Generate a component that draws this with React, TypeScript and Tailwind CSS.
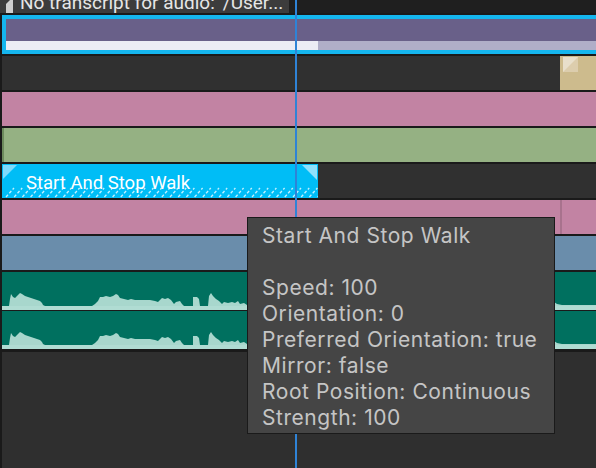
import React from 'react';

const WAVE =
  'M0,34 L7,34 L8,27 L9,22 L11,25 L13,26 L16,23 L18,21 L20,22 L23,24 L26,25 L29,26 L32,27 L35,28 L38,29 L40,31 L41,33 L43,34 L90,34 L93,32 L96,29 L98,25 L101,25 L104,24 L108,25 L111,24 L114,22 L116,23 L118,26 L122,27 L126,28 L129,27 L133,28 L138,28 L143,28 L148,28 L153,29 L156,30 L158,28 L160,26 L163,27 L166,26 L169,28 L172,32 L174,30 L178,29 L180,32 L182,34 L191,34 L191,25 L195,25 L197,27 L198,34 L206,34 L207,24 L209,21 L211,24 L214,27 L217,29 L220,32 L222,30 L226,31 L230,30 L233,31 L236,29 L238,32 L242,31 L245,33 L260,30 L280,32 L300,28 L320,31 L340,27 L360,32 L380,29 L400,31 L420,28 L440,32 L460,30 L480,31 L500,29 L520,32 L540,31 L552,30 L555,32 L560,33 L594,33 L594,34 Z';

function Channel() {
  return (
    <div className="h-[38px] bg-[#00705f]">
      <svg width="594" height="38" viewBox="0 0 594 38" className="block">
        <path d={WAVE} fill="#a8d7cd" />
        <rect x="0" y="34" width="594" height="4" fill="#b0dcd3" />
      </svg>
    </div>
  );
}

function Hatch() {
  const xs = Array.from({ length: 39 }, (_, i) => 4 + i * 8.2);
  return (
    <svg width="316" height="34" viewBox="0 0 316 34" className="absolute inset-0">
      <polygon points="1,1 15,1 1,15" fill="#7fdbfb" />
      <polygon points="300,1 315,1 315,16" fill="#8fe1fc" />
      {xs.map((x) => (
        <line
          key={x}
          x1={x}
          y1={33}
          x2={x + 8}
          y2={24}
          stroke="#c2f1ff"
          strokeWidth="1.3"
          strokeDasharray="3 2"
        />
      ))}
    </svg>
  );
}

export default function App() {
  return (
    <div className="relative w-[596px] h-[468px] overflow-hidden bg-[#1a1a1a] font-['Roboto',sans-serif]">
      {/* top partial row */}
      <div className="flex h-[13px]">
        <div className="w-[289px] bg-[#3c3c3c] flex overflow-hidden">
          <svg width="16" height="13" viewBox="0 0 16 13" className="shrink-0">
            <polygon points="6,4 10,0 13,0 13,13 6,13" fill="#cfcfcf" />
          </svg>
          <span className="ml-[4px] -mt-[7px] text-[19px] leading-[19px] text-[#e6e6e6] whitespace-nowrap">
            No transcript for audio: '/User...
          </span>
        </div>
        <div className="flex-1 bg-[#1f1f1f]" />
      </div>

      <div className="flex flex-col gap-[2px] mt-[2px] pl-[2px]">
        {/* selected clip */}
        <div className="h-[39px] border-[4px] border-r-0 border-[#15b6ee] flex flex-col">
          <div className="flex-1 bg-[#696089]" />
          <div className="h-[9px] flex">
            <div className="w-[312px] bg-[#ececf4]" />
            <div className="flex-1 bg-[#b0aec8]" />
          </div>
        </div>

        {/* empty row with tan clip */}
        <div className="h-[34px] flex bg-[#303030]">
          <div className="flex-1" />
          <div className="w-[36px] bg-[#cdbb8d] pt-[1px] pl-[3px]">
            <svg width="15" height="15" viewBox="0 0 15 15" className="block">
              <rect width="15" height="15" fill="#dccdad" />
              <polygon points="0,0 15,0 0,15" fill="#e8dfcb" />
            </svg>
          </div>
        </div>

        <div className="h-[34px] bg-[#c283a3]" />

        <div className="h-[34px] bg-[#95b183] border-l-[2px] border-[#6d8a5d]" />

        {/* walk clip */}
        <div className="h-[34px] flex bg-[#303030]">
          <div className="relative w-[316px] bg-[#00bdf6] pl-[24px] pt-[8px]">
            <Hatch />
            <span className="relative text-[18.5px] leading-[19px] text-white whitespace-nowrap">
              Start And Stop Walk
            </span>
          </div>
        </div>

        <div className="h-[34px] flex bg-[#c283a3]">
          <div className="w-[558px]" />
          <div className="w-[2px] bg-[#a8728d]" />
        </div>

        <div className="h-[34px] bg-[#6a8dab]" />

        {/* audio */}
        <div className="flex flex-col gap-[1px]">
          <Channel />
          <Channel />
        </div>
      </div>

      <div className="mt-[3px] ml-[2px] h-[116px] bg-[#2f2f2f]" />

      {/* playhead */}
      <div className="absolute left-[295px] top-0 w-[2px] h-[468px] bg-[#2f83d6]" />

      {/* tooltip */}
      <div className="absolute left-[247px] top-[217px] w-[308px] h-[217px] bg-[#454545] border border-[#1a1a1a] pl-[14px] pt-[5px] text-[#c5c5c5] text-[21px] tracking-[0.55px] leading-[26px] font-['Inter',sans-serif]">
        <div>Start And Stop Walk</div>
        <div className="h-[26px]" />
        <div>Speed: 100</div>
        <div>Orientation: 0</div>
        <div>Preferred Orientation: true</div>
        <div>Mirror: false</div>
        <div>Root Position: Continuous</div>
        <div>Strength: 100</div>
      </div>
    </div>
  );
}
